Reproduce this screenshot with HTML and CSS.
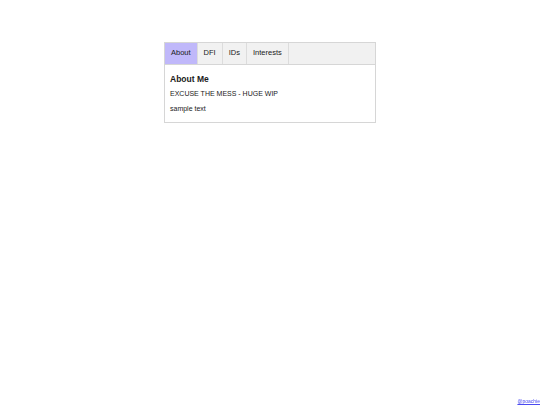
FILE: index.html
```html
<!DOCTYPE html>
<html>
<head>
<meta charset="utf-8">
<link rel="stylesheet" href="styles.css">
</head>
<body>
<div class="box">
  <div class="tabs">
    <div class="tab active">About</div>
    <div class="tab">DFI</div>
    <div class="tab">IDs</div>
    <div class="tab">Interests</div>
  </div>
  <div class="content">
    <h3 class="title">About Me</h3>
    <p class="line">EXCUSE THE MESS - HUGE WIP</p>
    <p class="line">sample text</p>
  </div>
</div>
<a class="credit" href="#">@poachie</a>
</body>
</html>
```
FILE: styles.css
```css
html, body {
  margin: 0;
  padding: 0;
  background: #fff;
  font-family: "Liberation Sans", Arial, sans-serif;
  color: #1a1a1a;
}
body {
  padding-top: 42px;
  height: 405px;
  box-sizing: border-box;
}
.box {
  width: 212px;
  margin: 0 auto;
  border: 1px solid #d6d6d6;
  box-sizing: border-box;
}
.tabs {
  display: flex;
  background: #f1f1f1;
  border-bottom: 1px solid #d6d6d6;
  height: 21px;
}
.tab {
  font-size: 7.5px;
  line-height: 20px;
  padding: 0 6px;
  border-right: 1px solid #dcdcdc;
}
.tab.active {
  background: #c0b8fa;
}
.content {
  padding: 6px 5px 9px;
}
.title {
  margin: 3px 0 6px;
  font-size: 8.5px;
  font-weight: bold;
}
.line {
  margin: 0 0 7px;
  font-size: 7px;
  line-height: 8px;
}
.line:last-child {
  margin-bottom: 0;
}
.credit {
  position: fixed;
  right: 0;
  bottom: 1px;
  font-size: 5px;
  color: #4a4af0;
}
```
